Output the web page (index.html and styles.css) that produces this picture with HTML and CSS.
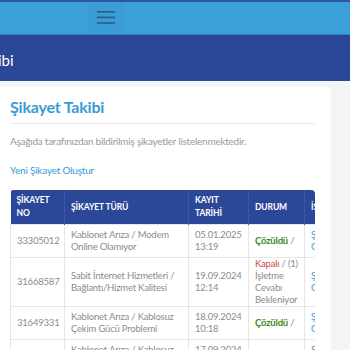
FILE: index.html
```html
<!doctype html>
<html lang="tr">
<head>
<meta charset="utf-8">
<title>Şikayet Takibi</title>
<link rel="stylesheet" href="styles.css">
</head>
<body>
<div class="topLine"></div>
<div class="navBar">
	<button class="navToggle" type="button">
		<svg width="18" height="13" viewBox="0 0 18 13">
			<rect x="0" y="0" width="18" height="1.6" fill="#2a5d85"/>
			<rect x="0" y="5.6" width="18" height="1.6" fill="#2a5d85"/>
			<rect x="0" y="11.2" width="18" height="1.6" fill="#2a5d85"/>
		</svg>
	</button>
</div>
<div class="pageBand">
	<span class="bandTitle">Şikayet Takibi</span>
</div>

<div class="pageBody">
	<div class="card">
		<h1 class="cardTitle">Şikayet Takibi</h1>
		<p class="cardText">Aşağıda tarafınızdan bildirilmiş şikayetler listelenmektedir.</p>
		<p class="cardLink"><a href="#">Yeni Şikayet Oluştur</a></p>

		<div class="tableWrap">
			<table class="listTb">
				<thead>
					<tr>
						<th class="colNo">ŞİKAYET<br>NO</th>
						<th class="colType">ŞİKAYET TÜRÜ</th>
						<th class="colDate">KAYIT<br>TARİHİ</th>
						<th class="colState">DURUM</th>
						<th class="colAct">İŞLEMLER</th>
					</tr>
				</thead>
				<tbody>
					<tr>
						<td>33305012</td>
						<td>Kablonet Arıza / Modem<br>Online Olamıyor</td>
						<td>05.01.2025<br>13:19</td>
						<td class="durum"><b class="ok">Çözüldü</b> /</td>
						<td class="act"><a href="#">Şikayeti<br>Görüntüle</a></td>
					</tr>
					<tr>
						<td>31668587</td>
						<td>Sabit İnternet Hizmetleri /<br>Bağlantı/Hizmet Kalitesi</td>
						<td>19.09.2024<br>12:14</td>
						<td class="durum"><span class="closed">Kapalı</span> / (1)<br>İşletme<br>Cevabı<br>Bekleniyor</td>
						<td class="act"><a href="#">Şikayeti<br>Görüntüle</a></td>
					</tr>
					<tr>
						<td>31649331</td>
						<td>Kablonet Arıza / Kablosuz<br>Çekim Gücü Problemi</td>
						<td>18.09.2024<br>10:18</td>
						<td class="durum"><b class="ok">Çözüldü</b> /</td>
						<td class="act"><a href="#">Şikayeti<br>Görüntüle</a></td>
					</tr>
					<tr>
						<td>31647210</td>
						<td>Kablonet Arıza / Kablosuz<br>Çekim Gücü Problemi</td>
						<td>17.09.2024<br>21:42</td>
						<td class="durum"><b class="ok">Çözüldü</b> /</td>
						<td class="act"><a href="#">Şikayeti<br>Görüntüle</a></td>
					</tr>
				</tbody>
			</table>
		</div>
	</div>
</div>
</body>
</html>
```

FILE: styles.css
```css
body{
	margin: 0;
	background: #f3f4f6;
	font-family: Lato, "Open Sans", "Liberation Sans", sans-serif;
	overflow: hidden;
}

.topLine{
	height: 2px;
	background: #2d55a3;
}

.navBar{
	height: 32px;
	background: #3b9fd8;
	border-bottom: 1px solid #3183bd;
	display: flex;
}

.navToggle{
	margin-left: 88px;
	width: 36px;
	height: 31px;
	border: none;
	background: #3a9cd5;
	padding: 0;
	display: flex;
	align-items: center;
	justify-content: center;
}

.pageBand{
	height: 46px;
	background: #2b4898;
	display: flex;
	align-items: center;
	overflow: hidden;
}

.bandTitle{
	color: #ffffff;
	font-size: 15px;
	white-space: nowrap;
	margin-left: -75px;
	padding-top: 4px;
}

.pageBody{
	padding: 6px 19px 0 0;
}

.card{
	background: #ffffff;
	padding: 9px 16px 10px 10px;
}

.cardTitle{
	margin: 0;
	padding-bottom: 5px;
	border-bottom: 1px solid #ececec;
	font-size: 16px;
	font-weight: 700;
	letter-spacing: -0.2px;
	line-height: 22px;
	color: #3a9ad5;
}

.cardText{
	margin: 10px 0 0;
	font-size: 10px;
	letter-spacing: -0.25px;
	line-height: 14px;
	color: #9a9a9a;
}

.cardLink{
	margin: 15px 0 0;
	font-size: 10px;
	letter-spacing: -0.2px;
	line-height: 14px;
}

.cardLink a{
	color: #3a9ad5;
	text-decoration: none;
}

.tableWrap{
	margin-top: 13px;
	overflow: hidden;
	border-radius: 4px 4px 0 0;
}

.listTb{
	border-collapse: collapse;
	table-layout: fixed;
	width: 394px;
	font-size: 9.5px;
	letter-spacing: -0.2px;
	line-height: 12px;
	color: #8c8c8c;
	white-space: nowrap;
}

.listTb th{
	box-sizing: border-box;
	background: #2b4898;
	color: #ffffff;
	font-size: 8.5px;
	font-weight: 700;
	letter-spacing: -0.1px;
	line-height: 13px;
	text-align: left;
	padding: 4px 6px;
	height: 34px;
	border-right: 1px solid #3a57a4;
}

.listTb td{
	padding: 4px 6px;
	border: 1px solid #e6e6e6;
	vertical-align: middle;
	overflow: hidden;
}

.colNo{ width: 54px; }
.colType{ width: 124px; }
.colDate{ width: 60px; }
.colState{ width: 56px; }
.colAct{ width: 100px; }

.listTb td.durum{
	padding-top: 0;
	padding-bottom: 0;
}

.ok{
	color: #3b8a1d;
}

.closed{
	color: #c9463c;
}

.act a{
	color: #3a9ad5;
	text-decoration: none;
}
```
